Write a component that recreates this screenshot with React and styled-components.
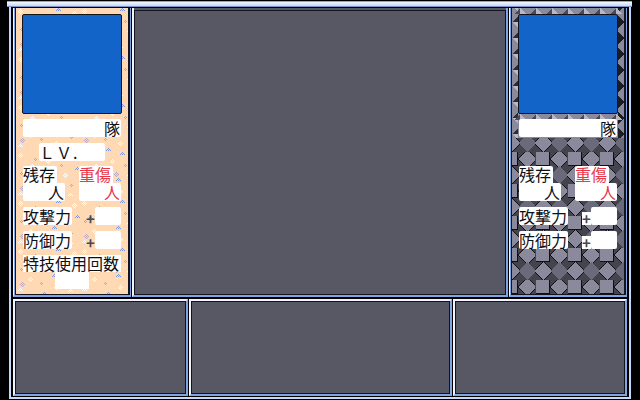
import React from 'react'
import styled, { createGlobalStyle } from 'styled-components'

const tile = (w, h, body) =>
  `url("data:image/svg+xml,${encodeURIComponent(
    `<svg xmlns='http://www.w3.org/2000/svg' width='${w}' height='${h}' shape-rendering='crispEdges'>${body}</svg>`
  )}")`

const dots = (color, list) =>
  list.map(([x, y]) => `<rect x='${x}' y='${y}' width='1' height='1' fill='${color}'/>`).join('')

// little checker clump, the speckle on the paper texture
const clump = (color, x, y) =>
  dots(color, [[x, y + 2], [x + 1, y + 1], [x + 1, y + 3], [x + 2, y], [x + 2, y + 2], [x + 2, y + 4], [x + 3, y + 1], [x + 3, y + 3], [x + 4, y + 2]])

const hook = (color, x, y) =>
  dots(color, [[x, y + 2], [x + 1, y + 1], [x + 2, y], [x + 2, y + 2], [x + 3, y + 1], [x + 4, y + 2]])

const cross = (color, x, y) =>
  dots(color, [[x, y + 1], [x + 1, y], [x + 1, y + 2], [x + 2, y + 1]])

const peachTile = tile(
  64,
  48,
  clump('#fff', 2, 1) + clump('#fff', 30, 7) + clump('#fff', 47, 21) + clump('#fff', 12, 29) +
    clump('#fff', 38, 37) + clump('#fff', 56, 3) + clump('#fff', 22, 18) +
    hook('#fff', 14, 12) + hook('#fff', 52, 41) + hook('#fff', 2, 40) +
    cross('#f08c98', 18, 6) + cross('#f08c98', 54, 32) + cross('#f08c98', 4, 20) +
    hook('#7c98e0', 40, 0) + hook('#7c98e0', 8, 16) + hook('#7c98e0', 26, 44) + hook('#7c98e0', 59, 15) + hook('#7c98e0', 36, 26) +
    clump('#b8a8c8', 34, 20) + clump('#b8a8c8', 4, 34) + cross('#b8a8c8', 44, 12) + cross('#b8a8c8', 24, 34)
)

const diamondTile = tile(
  32,
  32,
  `<rect width='32' height='32' fill='#44444e'/>
   <polygon points='24,-3 34,7 24,17 14,7' fill='#101014'/>
   <polygon points='24,-2 33,7 24,16 15,7' fill='#8a8a9c'/>
   <polygon points='8,13 18,23 8,33 -2,23' fill='#101014'/>
   <polygon points='8,14 17,23 8,32 -1,23' fill='#8a8a9c'/>
   <polygon points='24,14 33,23 24,32 15,23' fill='#6a6a7a'/>
   <rect x='1' y='0' width='14' height='14' fill='#101014'/>
   <rect x='1' y='0' width='13' height='13' fill='#8a8a9c'/>`
)

const topTeeth = tile(
  16,
  6,
  `<polygon points='2,6 8,0 8,6' fill='#4a4a56'/>
   <polygon points='8,0 14,6 8,6' fill='#b8b8c4'/>`
)

const leftTeeth = tile(
  6,
  16,
  `<polygon points='6,2 0,8 6,8' fill='#2c2c34'/>
   <polygon points='6,8 0,8 6,14' fill='#b8b8c4'/>`
)

const rightTeeth = tile(
  6,
  16,
  `<polygon points='0,2 6,8 0,14' fill='#1c1c24'/>`
)

const GlobalStyle = createGlobalStyle`
  html, body {
    margin: 0;
    background: #000;
  }
`

const Screen = styled.div`
  width: 640px;
  height: 400px;
  padding-top: 1px;
  box-sizing: border-box;
  background: #000;
  overflow: hidden;
  font-family: "Noto Sans CJK JP", "Liberation Sans", sans-serif;
  font-size: 16px;
  line-height: 18px;
  color: #101014;
`

const TopBar = styled.div`
  width: 625px;
  height: 6px;
  margin-left: 7px;
  box-sizing: border-box;
  background: linear-gradient(#f4f8ff, #c8d8f4);
  border-top: 1px solid #8ca4d8;
  border-bottom: 1px solid #7c94cc;
`

const Frame = styled.div`
  width: 622px;
  height: 392px;
  margin-left: 9px;
  box-sizing: border-box;
  padding: 1px 2px;
  border-left: 2px solid #c4d8f8;
  border-right: 2px solid #c4d8f8;
  border-bottom: 2px solid #c4d8f8;
  display: flex;
  flex-direction: column;
  gap: 2px;
`

const Row = styled.div`
  display: flex;
  gap: 1px;
  height: ${p => p.$height}px;
`

const Well = styled.div`
  width: ${p => p.$width}px;
  box-sizing: border-box;
  background: #585864;
  border: 2px solid;
  border-color: #f0f4ff #80a4e4 #80a4e4 #f0f4ff;
  border-top-width: ${p => (p.$open ? 0 : 2)}px;
  outline: 1px solid #14141c;
  outline-offset: -3px;
`

const StatPanel = styled.div`
  width: 118px;
  box-sizing: border-box;
  display: flex;
  flex-direction: column;
  padding: 0 3px;
  border-left: 1px solid #f0f4ff;
  border-right: 1px solid #80a4e4;
  border-bottom: 2px solid #80a4e4;
  box-shadow: inset 1px 0 0 #80a4e4, inset -1px 0 0 #14141c;
`

const PanelFill = styled.div`
  flex: 1;
  display: flex;
  flex-direction: column;
  margin: 0 -2px;
  border: 1px solid #14141c;
  border-top: 0;
  background: ${p => (p.$stone ? `${diamondTile} 23px 16px #44444e` : `${peachTile} #ffd8b4`)};
`

const PortraitWell = styled.div`
  padding: 6px 6px 0;
  height: 130px;
  box-sizing: border-box;
  flex: none;
  background: ${p =>
    p.$stone
      ? `${topTeeth} 0 0 repeat-x, ${topTeeth} 0 106px repeat-x, ${leftTeeth} 0 6px repeat-y, ${rightTeeth} 106px 6px repeat-y, #8a8a9c`
      : 'transparent'};
`

const Portrait = styled.div`
  width: 100px;
  height: 100px;
  box-sizing: border-box;
  background: #1264c8;
  border: 1px solid #14141c;
  border-radius: 2px;
`

const Stats = styled.div`
  flex: 1;
  display: flex;
  flex-direction: column;
  padding: 0 7px;
  margin-top: -19px;
`

const NameBox = styled.div`
  height: 18px;
  padding-right: 1px;
  background: #fff;
  text-align: right;
  border-radius: 2px;
  margin-bottom: 6px;
`

const LevelBox = styled.div`
  width: 66px;
  height: 18px;
  margin: 0 0 5px 16px;
  box-sizing: border-box;
  background: #fff;
  border-radius: 2px;
  white-space: nowrap;
  letter-spacing: 1px;
`

const CasualtyRow = styled.div`
  display: flex;
  justify-content: space-between;
  margin-top: ${p => (p.$spaced ? 23 : 0)}px;
  margin-bottom: 6px;
`

const Casualty = styled.div`
  width: 42px;
  color: ${p => (p.$red ? '#e83848' : 'inherit')};
`

const CasualtyLabel = styled.div`
  width: 34px;
  height: 17px;
  line-height: 17px;
  background: #fff;
  border-radius: 2px 2px 0 0;
  white-space: nowrap;
`

const CasualtyCount = styled.div`
  height: 18px;
  padding-right: 1px;
  background: #fff;
  text-align: right;
  border-radius: 0 2px 2px 2px;
`

const PowerRow = styled.div`
  display: flex;
  align-items: flex-start;
  justify-content: space-between;
  margin-bottom: 6px;
`

const PowerLabel = styled.div`
  width: 49px;
  height: 18px;
  background: #fff;
  border-radius: 2px;
  white-space: nowrap;
`

const Bonus = styled.div`
  display: flex;
  align-items: flex-end;
  height: 18px;
`

const Plus = styled.span`
  width: 9px;
  height: 13px;
  line-height: 13px;
  font-size: 15px;
  font-weight: 700;
  text-align: center;
  color: #484854;
  background: ${p => (p.$stone ? '#fff' : 'transparent')};
`

const PowerBox = styled.div`
  width: 26px;
  height: 18px;
  background: #fff;
  border-radius: 2px;
`

const SkillLabel = styled.div`
  height: 17px;
  line-height: 17px;
  background: #fff;
  white-space: nowrap;
`

const SkillBox = styled.div`
  width: 34px;
  height: 17px;
  margin-left: 32px;
  background: #fff;
`

function Fighter({ stone }) {
  return (
    <StatPanel>
      <PanelFill $stone={stone}>
        <PortraitWell $stone={stone}>
          <Portrait />
        </PortraitWell>
        <Stats>
          <NameBox>隊</NameBox>
          {!stone && <LevelBox>ＬＶ.</LevelBox>}
          <CasualtyRow $spaced={stone}>
            <Casualty>
              <CasualtyLabel>残存</CasualtyLabel>
              <CasualtyCount>人</CasualtyCount>
            </Casualty>
            <Casualty $red>
              <CasualtyLabel>重傷</CasualtyLabel>
              <CasualtyCount>人</CasualtyCount>
            </Casualty>
          </CasualtyRow>
          {['攻撃力', '防御力'].map(label => (
            <PowerRow key={label}>
              <PowerLabel>{label}</PowerLabel>
              <Bonus>
                <Plus $stone={stone}>+</Plus>
                <PowerBox />
              </Bonus>
            </PowerRow>
          ))}
          {!stone && (
            <>
              <SkillLabel>特技使用回数</SkillLabel>
              <SkillBox />
            </>
          )}
        </Stats>
      </PanelFill>
    </StatPanel>
  )
}

export default function App() {
  return (
    <Screen>
      <GlobalStyle />
      <TopBar />
      <Frame>
        <Row $height={290}>
          <Fighter />
          <Well $width={376} $open />
          <Fighter stone />
        </Row>
        <Row $height={97}>
          <Well $width={175} />
          <Well $width={263} />
          <Well $width={174} />
        </Row>
      </Frame>
    </Screen>
  )
}
